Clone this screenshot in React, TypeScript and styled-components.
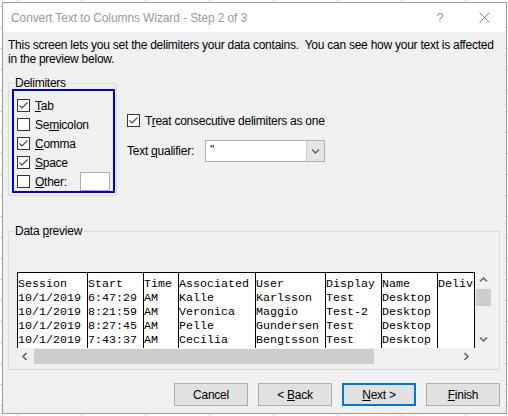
import React from 'react';
import styled, { createGlobalStyle } from 'styled-components';

const GlobalStyle = createGlobalStyle`
  html, body {
    margin: 0;
    padding: 0;
  }
  body {
    width: 508px;
    height: 416px;
    overflow: hidden;
    background-color: #fff;
    background-image: linear-gradient(to right, #d4d4d4 1px, transparent 1px),
      linear-gradient(to bottom, #d4d4d4 1px, transparent 1px);
    background-size: 64px 100%, 100% 21px;
    background-position: 17px 0, 0 6px;
    font-family: 'Liberation Sans', Arial, sans-serif;
    font-size: 12px;
    letter-spacing: -0.25px;
    color: #000;
  }
`;

const Window = styled.div`
  margin: 2px 0 0 2px;
  width: 505px;
  height: 412px;
  box-sizing: border-box;
  border: 1px solid #9b9b9b;
  background: #f0f0f0;
  display: flex;
  flex-direction: column;
`;

const TitleBar = styled.div`
  height: 29px;
  flex-shrink: 0;
  background: #fff;
  display: flex;
  align-items: center;
  padding-left: 8px;
`;

const Title = styled.div`
  flex: 1;
  color: #999;
  font-size: 12px;
  letter-spacing: -0.1px;
  white-space: nowrap;
`;

const CaptionButton = styled.div`
  width: 44px;
  height: 29px;
  display: flex;
  align-items: center;
  justify-content: center;
  color: #999;
  font-size: 13px;
`;

const Description = styled.div`
  margin: 6px 0 0 5px;
  line-height: 14px;
  white-space: pre;
`;

const U = styled.span`
  text-decoration: underline;
`;

const DelimiterRow = styled.div`
  display: flex;
  align-items: flex-start;
  margin: 10px 0 0 5px;
`;

const GroupBox = styled.fieldset<{ $width: number }>`
  margin: 0;
  padding: 0;
  min-width: 0;
  width: ${(p) => p.$width}px;
  box-sizing: border-box;
  border: 1px solid #dcdcdc;
`;

const Legend = styled.legend`
  margin-left: 5px;
  padding: 0 1px;
  line-height: 14px;
  font-size: 12px;
`;

const FocusBox = styled.div`
  margin: -1px 1px 2px 3px;
  height: 104px;
  box-sizing: border-box;
  border: 2px solid #0000cc;
  padding: 5px 0 0 3px;
  display: flex;
  flex-direction: column;
`;

const CheckRow = styled.div`
  display: flex;
  align-items: center;
  height: 19px;
  gap: 5px;
  white-space: nowrap;
`;

const Box = styled.span`
  width: 13px;
  height: 13px;
  box-sizing: border-box;
  border: 1px solid #333;
  background: #fff;
  display: inline-flex;
  flex-shrink: 0;
`;

const OtherInput = styled.div`
  margin-left: auto;
  margin-right: 3px;
  width: 30px;
  height: 19px;
  box-sizing: border-box;
  border: 1px solid #adadad;
  background: #fff;
`;

const RightColumn = styled.div`
  margin-left: 10px;
  padding-top: 35px;
  display: flex;
  flex-direction: column;
  gap: 10px;
`;

const QualifierRow = styled.div`
  display: flex;
  align-items: center;
  height: 22px;
`;

const QualifierLabel = styled.span`
  width: 78px;
`;

const Combo = styled.div`
  width: 120px;
  height: 22px;
  box-sizing: border-box;
  border: 1px solid #adadad;
  background: #fff;
  display: flex;
`;

const ComboValue = styled.div`
  flex: 1;
  padding: 2px 0 0 4px;
  line-height: 14px;
`;

const DropButton = styled.div`
  width: 17px;
  background: #e5e5e5;
  border-left: 1px solid #cfcfcf;
  display: flex;
  align-items: center;
  justify-content: center;
`;

const PreviewGroup = styled(GroupBox)`
  margin: 28px 0 0 5px;
`;

const PreviewInner = styled.div`
  padding: 34px 0 4px 8px;
`;

const PreviewBox = styled.div`
  width: 475px;
  height: 93px;
  display: grid;
  grid-template-columns: 458px 17px;
  grid-template-rows: 76px 17px;
`;

const DataArea = styled.div`
  background: #fff;
  border-top: 1px solid #000;
  border-right: 1px solid #000;
  box-sizing: border-box;
  display: flex;
  overflow: hidden;
  font-family: 'Liberation Mono', 'Courier New', monospace;
  font-size: 11.667px;
  letter-spacing: 0;
`;

const Column = styled.div<{ $width?: number }>`
  ${(p) => (p.$width ? `width: ${p.$width}px; flex-shrink: 0;` : 'flex: 1;')}
  box-sizing: border-box;
  border-left: 1px solid #000;
  padding-top: 4px;
  overflow: hidden;
  white-space: pre;
`;

const Cell = styled.div`
  height: 14px;
  line-height: 14px;
`;

const VScroll = styled.div`
  background: #f0f0f0;
  display: flex;
  flex-direction: column;
`;

const HScroll = styled.div`
  background: #f0f0f0;
  display: flex;
`;

const Corner = styled.div`
  background: #f0f0f0;
`;

const Arrow = styled.div`
  width: 17px;
  height: 17px;
  flex-shrink: 0;
  display: flex;
  align-items: center;
  justify-content: center;
`;

const Spacer = styled.div`
  flex: 1;
`;

const VThumb = styled.div`
  margin-left: 1px;
  width: 15px;
  height: 17px;
  background: #cdcdcd;
`;

const HThumb = styled.div`
  margin-top: 1px;
  width: 340px;
  height: 15px;
  background: #cdcdcd;
`;

const ButtonRow = styled.div`
  display: flex;
  justify-content: flex-end;
  gap: 10px;
  margin-top: 13px;
  padding-right: 6px;
`;

const Button = styled.div<{ $primary?: boolean }>`
  width: 74px;
  height: 23px;
  box-sizing: border-box;
  background: #e1e1e1;
  border: ${(p) => (p.$primary ? '2px solid #0078d7' : '1px solid #adadad')};
  display: flex;
  align-items: center;
  justify-content: center;
  white-space: pre;
`;

const Check = ({ checked }: { checked?: boolean }) => (
  <Box>
    {checked && (
      <svg width="11" height="11" viewBox="0 0 11 11">
        <polyline points="1.5,5.5 4,8 9.5,2.5" fill="none" stroke="#444" strokeWidth="1.1" />
      </svg>
    )}
  </Box>
);

const Chevron = ({ dir }: { dir: 'up' | 'down' | 'left' | 'right' }) => {
  const pts = {
    up: '1,5.5 4.5,2 8,5.5',
    down: '1,2.5 4.5,6 8,2.5',
    left: '5.5,1 2,4.5 5.5,8',
    right: '2.5,1 6,4.5 2.5,8',
  }[dir];
  return (
    <svg width="9" height="9" viewBox="0 0 9 9">
      <polyline points={pts} fill="none" stroke="#606060" strokeWidth="1.5" />
    </svg>
  );
};

const columns: { width?: number; cells: string[] }[] = [
  { width: 70, cells: ['Session', '10/1/2019', '10/1/2019', '10/1/2019', '10/1/2019'] },
  { width: 56, cells: ['Start', '6:47:29', '8:21:59', '8:27:45', '7:43:37'] },
  { width: 35, cells: ['Time', 'AM', 'AM', 'AM', 'AM'] },
  { width: 77, cells: ['Associated', 'Kalle', 'Veronica', 'Pelle', 'Cecilia'] },
  { width: 70, cells: ['User', 'Karlsson', 'Maggio', 'Gundersen', 'Bengtsson'] },
  { width: 56, cells: ['Display', 'Test', 'Test-2', 'Test', 'Test'] },
  { width: 56, cells: ['Name', 'Desktop', 'Desktop', 'Desktop', 'Desktop'] },
  { cells: ['Delivery', '', '', '', ''] },
];

const App: React.FC = () => {
  return (
    <>
      <GlobalStyle />
      <Window>
        <TitleBar>
          <Title>Convert Text to Columns Wizard - Step 2 of 3</Title>
          <CaptionButton>?</CaptionButton>
          <CaptionButton>
            <svg width="11" height="11" viewBox="0 0 11 11">
              <path d="M0.5 0.5 L10.5 10.5 M10.5 0.5 L0.5 10.5" stroke="#8a8a8a" strokeWidth="1" />
            </svg>
          </CaptionButton>
        </TitleBar>

        <Description>
          This screen lets you set the delimiters your data contains.  You can see how your text is affected
          {'\n'}in the preview below.
        </Description>

        <DelimiterRow>
          <GroupBox $width={109}>
            <Legend>Delimiters</Legend>
            <FocusBox>
              <CheckRow>
                <Check checked />
                <span>
                  <U>T</U>ab
                </span>
              </CheckRow>
              <CheckRow>
                <Check />
                <span>
                  Se<U>m</U>icolon
                </span>
              </CheckRow>
              <CheckRow>
                <Check checked />
                <span>
                  <U>C</U>omma
                </span>
              </CheckRow>
              <CheckRow>
                <Check checked />
                <span>
                  <U>S</U>pace
                </span>
              </CheckRow>
              <CheckRow>
                <Check />
                <span>
                  <U>O</U>ther:
                </span>
                <OtherInput />
              </CheckRow>
            </FocusBox>
          </GroupBox>

          <RightColumn>
            <CheckRow>
              <Check checked />
              <span>
                T<U>r</U>eat consecutive delimiters as one
              </span>
            </CheckRow>
            <QualifierRow>
              <QualifierLabel>
                Text <U>q</U>ualifier:
              </QualifierLabel>
              <Combo>
                <ComboValue>"</ComboValue>
                <DropButton>
                  <Chevron dir="down" />
                </DropButton>
              </Combo>
            </QualifierRow>
          </RightColumn>
        </DelimiterRow>

        <PreviewGroup $width={492}>
          <Legend>
            Data <U>p</U>review
          </Legend>
          <PreviewInner>
            <PreviewBox>
              <DataArea>
                {columns.map((col, i) => (
                  <Column key={i} $width={col.width}>
                    {col.cells.map((c, j) => (
                      <Cell key={j}>{c}</Cell>
                    ))}
                  </Column>
                ))}
              </DataArea>
              <VScroll>
                <Arrow>
                  <Chevron dir="up" />
                </Arrow>
                <VThumb />
                <Spacer />
                <Arrow>
                  <Chevron dir="down" />
                </Arrow>
              </VScroll>
              <HScroll>
                <Arrow>
                  <Chevron dir="left" />
                </Arrow>
                <HThumb />
                <Spacer />
                <Arrow>
                  <Chevron dir="right" />
                </Arrow>
              </HScroll>
              <Corner />
            </PreviewBox>
          </PreviewInner>
        </PreviewGroup>

        <ButtonRow>
          <Button>Cancel</Button>
          <Button>
            <span>
              {'< '}
              <U>B</U>ack
            </span>
          </Button>
          <Button $primary>
            <span>
              <U>N</U>ext {'>'}
            </span>
          </Button>
          <Button>
            <span>
              <U>F</U>inish
            </span>
          </Button>
        </ButtonRow>
      </Window>
    </>
  );
};

export default App;
